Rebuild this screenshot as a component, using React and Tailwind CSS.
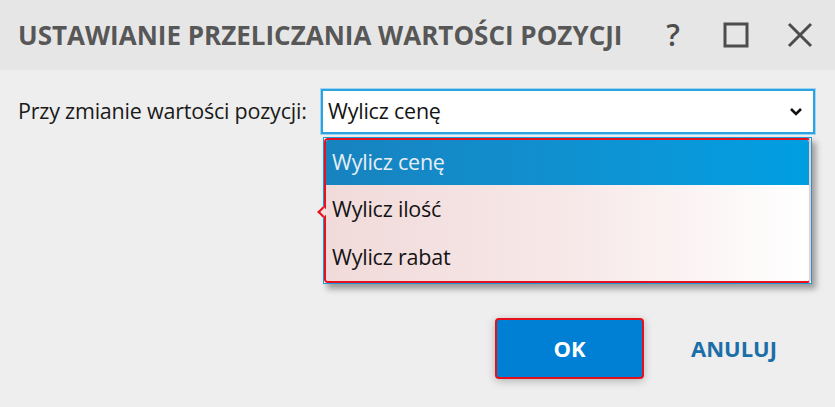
import { useState } from "react";

const options = ["Wylicz cenę", "Wylicz ilość", "Wylicz rabat"];

function TitleBar() {
  return (
    <div className="flex h-[70px] items-center bg-[#e6e6e6] pl-[18px] pr-[22px]">
      <h1 className="flex-1 text-[26px] font-bold text-[#575757]">
        USTAWIANIE PRZELICZANIA WARTOŚCI POZYCJI
      </h1>
      <div className="flex items-center gap-[38px] text-[#4d4d4d]">
        <span className="w-[24px] text-center text-[30px] font-semibold leading-none">?</span>
        <svg width="26" height="26" viewBox="0 0 26 26">
          <rect x="2" y="2" width="22" height="22" fill="none" stroke="currentColor" strokeWidth="3" />
        </svg>
        <svg width="26" height="26" viewBox="0 0 26 26">
          <path d="M2 2 L24 24 M24 2 L2 24" stroke="currentColor" strokeWidth="3" />
        </svg>
      </div>
    </div>
  );
}

function Dropdown({ value, onPick }) {
  return (
    <div className="absolute left-[2px] top-[48px] z-10 w-[489px] border border-[#1b9ad8] bg-white shadow-[4px_5px_6px_rgba(0,0,0,0.35)]">
      <div className="relative rounded-[4px] border-2 border-[#e8101c] border-r-[#f3c9cc]">
        <span className="absolute left-[-7px] top-[68px] h-[8px] w-[8px] rotate-45 border-b-2 border-l-2 border-[#e8101c] bg-[#f3dede]" />
        <div className="overflow-hidden rounded-[2px] bg-gradient-to-r from-[#f1dada] via-[#f7e8e8] to-white">
          {options.map((o) => (
            <div
              key={o}
              onClick={() => onPick(o)}
              className={
                o === value
                  ? "flex h-[45px] items-center bg-gradient-to-r from-[#1783bf] to-[#009fe2] pl-[6px] text-[#e6eef6]"
                  : "flex h-[48px] items-center pl-[6px] text-[#141414]"
              }
            >
              {o}
            </div>
          ))}
        </div>
      </div>
    </div>
  );
}

export default function App() {
  const [value, setValue] = useState("Wylicz cenę");

  return (
    <div className="h-[407px] w-[835px] bg-[#eeeeee] font-['Open_Sans',sans-serif]">
      <TitleBar />
      <div className="flex items-center pl-[18px] pt-[19px] text-[21.5px] tracking-[-0.01em]">
        <label className="w-[303px] text-[#1a1a1a]">Przy zmianie wartości pozycji:</label>
        <div className="relative">
          <div className="flex h-[45px] w-[494px] items-center justify-between border-2 border-[#2aa3df] bg-white pl-[5px] pr-[10px] text-[#141414] shadow-[0_0_0_1px_#9fd5f0]">
            <span>{value}</span>
            <svg width="14" height="10" viewBox="0 0 14 10">
              <path d="M2 2 L7 7 L12 2" fill="none" stroke="#111" strokeWidth="2.6" />
            </svg>
          </div>
          <Dropdown value={value} onPick={setValue} />
        </div>
      </div>
      <div className="mt-[184px] flex items-center pl-[495px]">
        <button className="h-[61px] w-[149px] rounded-[4px] border-2 border-[#e5101b] bg-[#0080d5] text-[22px] font-bold text-white shadow-[0_2px_8px_rgba(0,0,0,0.25)]">
          OK
        </button>
        <button className="ml-[47px] text-[22px] font-bold text-[#1b6fa8]">ANULUJ</button>
      </div>
    </div>
  );
}
